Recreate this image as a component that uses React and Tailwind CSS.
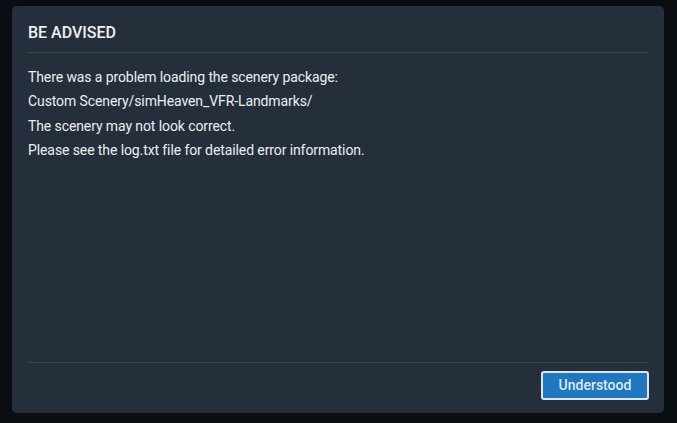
import React from 'react'

const lines = [
  'There was a problem loading the scenery package:',
  'Custom Scenery/simHeaven_VFR-Landmarks/',
  'The scenery may not look correct.',
  'Please see the log.txt file for detailed error information.',
]

export default function App() {
  return (
    <div className="h-[423px] w-[677px] bg-[#0a0e13] pt-[6px] pl-[12px] pr-[13px] pb-[10px] font-['Roboto',sans-serif]">
      <div className="flex h-full flex-col rounded-[5px] bg-[#252e3b] px-4">
        <div className="border-b border-[#3b4553] pt-[16px] pb-[8px]">
          <h1 className="text-[16px] leading-[22px] font-medium text-[#eef0f2]">BE ADVISED</h1>
        </div>
        <div className="flex-1 pt-[12px] text-[14px] leading-[24.4px] tracking-[-0.1px] text-[#eceef0]">
          {lines.map((l) => (
            <p key={l}>{l}</p>
          ))}
        </div>
        <div className="flex justify-end border-t border-[#3b4553] pt-[8px] pb-[13px]">
          <button className="-mr-[1px] h-[29px] w-[108px] rounded-[3px] border-2 border-[#dbe6f1] bg-[#1f77bf] text-[14px] font-medium text-[#dce9f5]">
            Understood
          </button>
        </div>
      </div>
    </div>
  )
}
